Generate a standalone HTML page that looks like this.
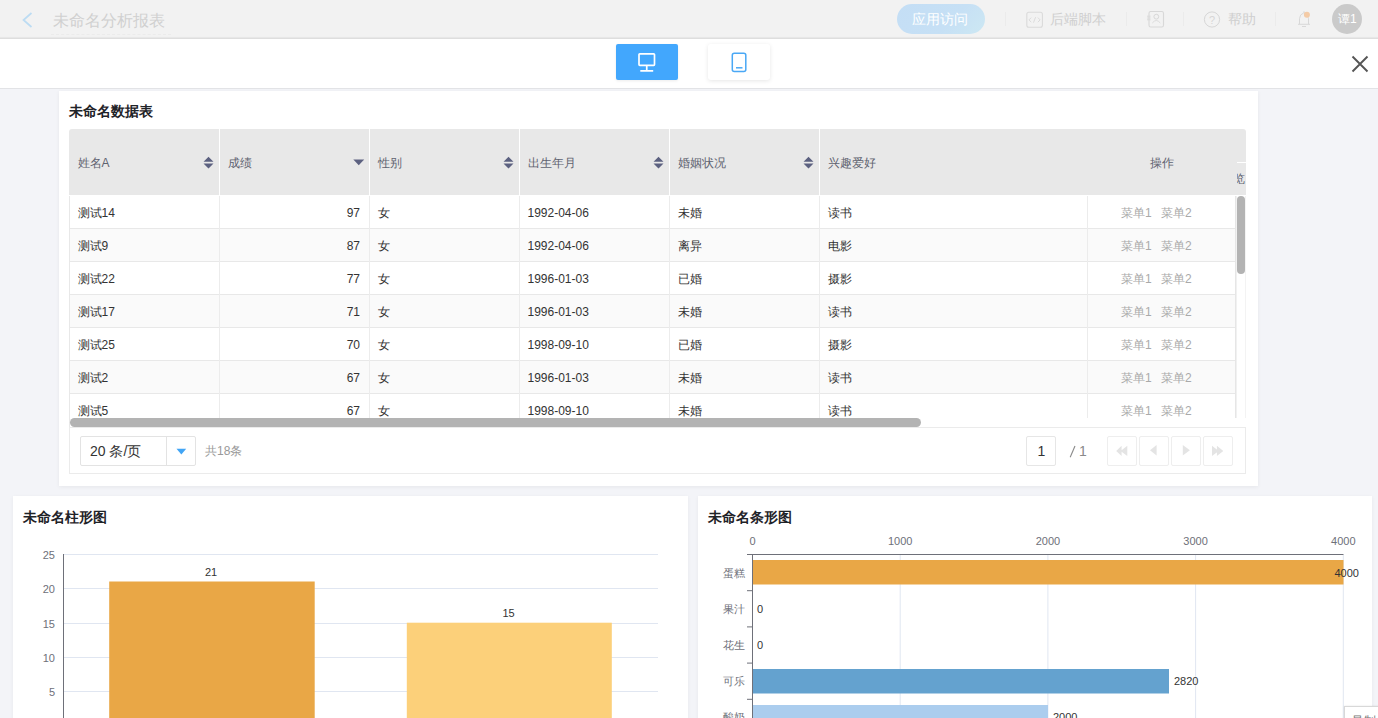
<!DOCTYPE html>
<html><head><meta charset="utf-8">
<style>
*{margin:0;padding:0;box-sizing:border-box}
html,body{width:1378px;height:718px;overflow:hidden}
body{font-family:"Liberation Sans",sans-serif;background:#f3f4f8;position:relative;color:#333}
.abs{position:absolute}
#top{left:0;top:0;width:1378px;height:39px;background:#f2f2f2;border-bottom:1px solid #dedede;box-shadow:inset 0 -2px 1px -1px #e6e6e6}
#bar2{left:0;top:39px;width:1378px;height:50px;background:#fff;border-bottom:1px solid #e2e3e6}
.card{position:absolute;background:#fff}
.t{position:absolute;white-space:nowrap;line-height:1}
.hd{font-size:12px;color:#5f6370}
.bd{font-size:12px;color:#333}
.op{font-size:12px;color:#aaa}
</style></head><body>
<!-- top bar -->
<div id="top" class="abs">
  <svg class="abs" style="left:20px;top:11px" width="14" height="18" viewBox="0 0 14 18"><path d="M11.5 2 L3.5 9 L11.5 16" fill="none" stroke="#bcdcf3" stroke-width="1.7"/></svg>
  <div class="t" style="left:53px;top:12.8px;font-size:16px;color:#d0d0d0">未命名分析报表</div>
  <div class="abs" style="left:51px;top:34px;width:120px;border-top:1px dashed #ebebeb"></div>
  <div class="abs" style="left:897px;top:4px;width:88px;height:30px;border-radius:15px;background:linear-gradient(135deg,#c4def5 0%,#c6e0f5 60%,#cde8f3 100%)"></div>
  <div class="t" style="left:912px;top:12px;font-size:14px;color:#fff">应用访问</div>
  <div class="abs" style="left:1005px;top:12px;width:1px;height:14px;background:#ebebeb"></div>
  <svg class="abs" style="left:1026px;top:11px" width="18" height="18" viewBox="0 0 18 18"><rect x="0.8" y="1.2" width="15.6" height="15" rx="2" fill="none" stroke="#dadada" stroke-width="1.1"/><path d="M5.2 6.6 L3 8.9 L5.2 11.2 M11.9 6.6 L14.1 8.9 L11.9 11.2 M9.6 6.2 L7.5 11.6" fill="none" stroke="#d8d8d8" stroke-width="0.9"/></svg>
  <div class="t" style="left:1050px;top:12px;font-size:14px;color:#cfcfcf">后端脚本</div>
  <div class="abs" style="left:1126px;top:12px;width:1px;height:14px;background:#ebebeb"></div>
  <svg class="abs" style="left:1146px;top:11px" width="19" height="17" viewBox="0 0 19 17"><rect x="3" y="0.5" width="14.5" height="15.5" rx="1.8" fill="none" stroke="#d8d8d8" stroke-width="1.1"/><circle cx="10.3" cy="5.7" r="2.4" fill="none" stroke="#d8d8d8" stroke-width="1"/><path d="M6.3 12 Q10.3 7 14.3 12 M1 5.2 H4.6 M1 7 H4.6 M1 8.8 H4.6" fill="none" stroke="#d8d8d8" stroke-width="0.9"/></svg>
  <div class="abs" style="left:1183px;top:12px;width:1px;height:14px;background:#ebebeb"></div>
  <svg class="abs" style="left:1203px;top:11px" width="18" height="17" viewBox="0 0 18 17"><circle cx="9" cy="8.5" r="7.6" fill="none" stroke="#d6d6d6" stroke-width="1"/><text x="9" y="12.6" font-size="11" text-anchor="middle" fill="#d6d6d6" font-family="Liberation Sans">?</text></svg>
  <div class="t" style="left:1228px;top:12px;font-size:14px;color:#cfcfcf">帮助</div>
  <div class="abs" style="left:1275px;top:12px;width:1px;height:14px;background:#ebebeb"></div>
  <svg class="abs" style="left:1296px;top:10px" width="16" height="18" viewBox="0 0 16 18"><path d="M2 14.3 H14 M3.5 14.3 V8.6 Q3.5 4.6 8 2.6 Q12.5 4.6 12.5 8.6 V14.3 M8 1.3 V2.6 M6 16.5 H10" fill="none" stroke="#d8d8d8" stroke-width="1"/><circle cx="10.9" cy="4.8" r="3" fill="#f4cba6"/></svg>
  <div class="abs" style="left:1332px;top:4px;width:30px;height:30px;border-radius:50%;background:#cacaca"></div>
  <div class="t" style="left:1338px;top:13px;font-size:12px;color:#fff">谭1</div>
</div>
<!-- bar 2 -->
<div id="bar2" class="abs">
  <div class="abs" style="left:616px;top:5px;width:62px;height:36px;border-radius:2px;background:#42a7fd;box-shadow:0 1px 3px rgba(0,0,0,0.08)"></div>
  <svg class="abs" style="left:636px;top:12px" width="22" height="22" viewBox="0 0 22 22"><rect x="3" y="2.8" width="15.5" height="11.5" rx="0.8" fill="none" stroke="#fff" stroke-width="1.7"/><path d="M10.75 14.3 V19.5 M4.3 19.9 H17.2" fill="none" stroke="#fff" stroke-width="1.7"/></svg>
  <div class="abs" style="left:708px;top:5px;width:62px;height:36px;border-radius:3px;background:#fff;box-shadow:0 1px 4px rgba(0,0,0,0.1)"></div>
  <svg class="abs" style="left:729px;top:12px" width="20" height="22" viewBox="0 0 20 22"><rect x="3.3" y="2.2" width="13.5" height="18.2" rx="2" fill="none" stroke="#4aa8f5" stroke-width="1.5"/><path d="M7 16.8 H13.5" stroke="#4aa8f5" stroke-width="1.5"/></svg>
  <svg class="abs" style="left:1349.5px;top:15px" width="20" height="20" viewBox="0 0 20 20"><path d="M2.5 2.5 L17.5 17.5 M17.5 2.5 L2.5 17.5" stroke="#555" stroke-width="1.9"/></svg>
</div>
<!-- table card -->
<!-- table card -->
<div class="card" style="left:59px;top:91px;width:1199px;height:395px;box-shadow:0 1px 4px rgba(0,0,0,0.06)"></div>
<div class="t" style="left:69px;top:104px;font-size:14px;font-weight:bold;color:#1f2328">未命名数据表</div>
<div class="abs" style="left:69px;top:129px;width:1177px;height:66px;background:#e8e8e8;border-radius:3px 3px 0 0"></div>
<div class="abs" style="left:219px;top:129px;width:1px;height:67px;background:#fff"></div>
<div class="abs" style="left:369px;top:129px;width:1px;height:67px;background:#fff"></div>
<div class="abs" style="left:519px;top:129px;width:1px;height:67px;background:#fff"></div>
<div class="abs" style="left:669px;top:129px;width:1px;height:67px;background:#fff"></div>
<div class="abs" style="left:819px;top:129px;width:1px;height:67px;background:#fff"></div>
<div class="t hd" style="left:77.5px;top:156.5px">姓名A</div>
<div class="t hd" style="left:227.5px;top:156.5px">成绩</div>
<div class="t hd" style="left:377.5px;top:156.5px">性别</div>
<div class="t hd" style="left:527.5px;top:156.5px">出生年月</div>
<div class="t hd" style="left:677.5px;top:156.5px">婚姻状况</div>
<div class="t hd" style="left:827.5px;top:156.5px">兴趣爱好</div>
<svg class="abs" style="left:203.4px;top:156px" width="11" height="13" viewBox="0 0 11 13"><path d="M0.5 5.8 L5.5 0.8 L10.5 5.8Z M0.5 7.6 L5.5 12.6 L10.5 7.6Z" fill="#5c6180"/></svg>
<svg class="abs" style="left:503.4px;top:156px" width="11" height="13" viewBox="0 0 11 13"><path d="M0.5 5.8 L5.5 0.8 L10.5 5.8Z M0.5 7.6 L5.5 12.6 L10.5 7.6Z" fill="#5c6180"/></svg>
<svg class="abs" style="left:653.4px;top:156px" width="11" height="13" viewBox="0 0 11 13"><path d="M0.5 5.8 L5.5 0.8 L10.5 5.8Z M0.5 7.6 L5.5 12.6 L10.5 7.6Z" fill="#5c6180"/></svg>
<svg class="abs" style="left:803.4px;top:156px" width="11" height="13" viewBox="0 0 11 13"><path d="M0.5 5.8 L5.5 0.8 L10.5 5.8Z M0.5 7.6 L5.5 12.6 L10.5 7.6Z" fill="#5c6180"/></svg>
<svg class="abs" style="left:353px;top:159px" width="12" height="7" viewBox="0 0 12 7"><path d="M0.3 0.5 L11.2 0.5 L5.75 6.3Z" fill="#5c6180"/></svg>
<div class="t hd" style="left:1150px;top:156.5px">操作</div>
<div class="abs" style="left:1237px;top:162px;width:9px;height:1px;background:#fff"></div>
<div class="abs" style="left:1237px;top:172px;width:9px;height:12px;overflow:hidden"><div class="t hd" style="left:-4px;top:1px">览</div></div>
<div class="abs" style="left:69px;top:196px;width:1177px;height:222px;overflow:hidden">
<div class="abs" style="left:0;top:0px;width:1167px;height:33px;background:#fff;border-bottom:1px solid #e8e8e8"></div>
<div class="t bd" style="left:8.5px;top:11px">测试14</div>
<div class="t bd" style="left:150px;width:141px;text-align:right;top:11px">97</div>
<div class="t bd" style="left:308.5px;top:11px">女</div>
<div class="t bd" style="left:458.5px;top:11px">1992-04-06</div>
<div class="t bd" style="left:608.5px;top:11px">未婚</div>
<div class="t bd" style="left:758.5px;top:11px">读书</div>
<div class="t op" style="left:1052px;top:11px">菜单1</div><div class="t op" style="left:1092px;top:11px">菜单2</div>
<div class="abs" style="left:0;top:33px;width:1167px;height:33px;background:#fafafa;border-bottom:1px solid #e8e8e8"></div>
<div class="t bd" style="left:8.5px;top:44px">测试9</div>
<div class="t bd" style="left:150px;width:141px;text-align:right;top:44px">87</div>
<div class="t bd" style="left:308.5px;top:44px">女</div>
<div class="t bd" style="left:458.5px;top:44px">1992-04-06</div>
<div class="t bd" style="left:608.5px;top:44px">离异</div>
<div class="t bd" style="left:758.5px;top:44px">电影</div>
<div class="t op" style="left:1052px;top:44px">菜单1</div><div class="t op" style="left:1092px;top:44px">菜单2</div>
<div class="abs" style="left:0;top:66px;width:1167px;height:33px;background:#fff;border-bottom:1px solid #e8e8e8"></div>
<div class="t bd" style="left:8.5px;top:77px">测试22</div>
<div class="t bd" style="left:150px;width:141px;text-align:right;top:77px">77</div>
<div class="t bd" style="left:308.5px;top:77px">女</div>
<div class="t bd" style="left:458.5px;top:77px">1996-01-03</div>
<div class="t bd" style="left:608.5px;top:77px">已婚</div>
<div class="t bd" style="left:758.5px;top:77px">摄影</div>
<div class="t op" style="left:1052px;top:77px">菜单1</div><div class="t op" style="left:1092px;top:77px">菜单2</div>
<div class="abs" style="left:0;top:99px;width:1167px;height:33px;background:#fafafa;border-bottom:1px solid #e8e8e8"></div>
<div class="t bd" style="left:8.5px;top:110px">测试17</div>
<div class="t bd" style="left:150px;width:141px;text-align:right;top:110px">71</div>
<div class="t bd" style="left:308.5px;top:110px">女</div>
<div class="t bd" style="left:458.5px;top:110px">1996-01-03</div>
<div class="t bd" style="left:608.5px;top:110px">未婚</div>
<div class="t bd" style="left:758.5px;top:110px">读书</div>
<div class="t op" style="left:1052px;top:110px">菜单1</div><div class="t op" style="left:1092px;top:110px">菜单2</div>
<div class="abs" style="left:0;top:132px;width:1167px;height:33px;background:#fff;border-bottom:1px solid #e8e8e8"></div>
<div class="t bd" style="left:8.5px;top:143px">测试25</div>
<div class="t bd" style="left:150px;width:141px;text-align:right;top:143px">70</div>
<div class="t bd" style="left:308.5px;top:143px">女</div>
<div class="t bd" style="left:458.5px;top:143px">1998-09-10</div>
<div class="t bd" style="left:608.5px;top:143px">已婚</div>
<div class="t bd" style="left:758.5px;top:143px">摄影</div>
<div class="t op" style="left:1052px;top:143px">菜单1</div><div class="t op" style="left:1092px;top:143px">菜单2</div>
<div class="abs" style="left:0;top:165px;width:1167px;height:33px;background:#fafafa;border-bottom:1px solid #e8e8e8"></div>
<div class="t bd" style="left:8.5px;top:176px">测试2</div>
<div class="t bd" style="left:150px;width:141px;text-align:right;top:176px">67</div>
<div class="t bd" style="left:308.5px;top:176px">女</div>
<div class="t bd" style="left:458.5px;top:176px">1996-01-03</div>
<div class="t bd" style="left:608.5px;top:176px">未婚</div>
<div class="t bd" style="left:758.5px;top:176px">读书</div>
<div class="t op" style="left:1052px;top:176px">菜单1</div><div class="t op" style="left:1092px;top:176px">菜单2</div>
<div class="abs" style="left:0;top:198px;width:1167px;height:33px;background:#fff;border-bottom:1px solid #e8e8e8"></div>
<div class="t bd" style="left:8.5px;top:209px">测试5</div>
<div class="t bd" style="left:150px;width:141px;text-align:right;top:209px">67</div>
<div class="t bd" style="left:308.5px;top:209px">女</div>
<div class="t bd" style="left:458.5px;top:209px">1998-09-10</div>
<div class="t bd" style="left:608.5px;top:209px">未婚</div>
<div class="t bd" style="left:758.5px;top:209px">读书</div>
<div class="t op" style="left:1052px;top:209px">菜单1</div><div class="t op" style="left:1092px;top:209px">菜单2</div>
<div class="abs" style="left:150px;top:0;width:1px;height:222px;background:#ececec"></div>
<div class="abs" style="left:300px;top:0;width:1px;height:222px;background:#ececec"></div>
<div class="abs" style="left:450px;top:0;width:1px;height:222px;background:#ececec"></div>
<div class="abs" style="left:600px;top:0;width:1px;height:222px;background:#ececec"></div>
<div class="abs" style="left:750px;top:0;width:1px;height:222px;background:#ececec"></div>
<div class="abs" style="left:1018px;top:0;width:1px;height:222px;background:#ececec"></div>
<div class="abs" style="left:1166px;top:0;width:1px;height:222px;background:#e6e6e6"></div>
<div class="abs" style="left:1167px;top:0;width:1px;height:222px;background:#f1f1f1"></div>
<div class="abs" style="left:1176px;top:0;width:1px;height:222px;background:#f3f3f3"></div>
<div class="abs" style="left:1168px;top:0;width:8px;height:78px;border-radius:4px;background:#b3b3b3"></div>
</div>
<div class="abs" style="left:69px;top:196px;width:1px;height:278px;background:#e8e8e8"></div>
<div class="abs" style="left:70px;top:418px;width:851px;height:9px;border-radius:4.5px;background:#b3b3b3"></div>
<div class="abs" style="left:69px;top:427px;width:1177px;height:47px;border:1px solid #ebebeb"></div>
<div class="abs" style="left:80px;top:436px;width:116px;height:30px;border:1px solid #e3e3e3;border-radius:2px;background:#fff"></div>
<div class="abs" style="left:166px;top:437px;width:1px;height:28px;background:#e3e3e3"></div>
<svg class="abs" style="left:176px;top:448px" width="11" height="7" viewBox="0 0 11 7"><path d="M0.5 0.8 L10.2 0.8 L5.35 6.4Z" fill="#42a5f5"/></svg>
<div class="t" style="left:90px;top:444px;font-size:14px;color:#333">20 条/页</div>
<div class="t" style="left:205px;top:445px;font-size:12px;color:#999">共18条</div>
<div class="abs" style="left:1026px;top:436px;width:30px;height:30px;border:1px solid #e6e6e6;border-radius:2px"></div>
<div class="t" style="left:1037.5px;top:444px;font-size:14px;color:#333">1</div>
<svg class="abs" style="left:1068px;top:444px" width="10" height="16" viewBox="0 0 10 16"><path d="M2.2 13.2 L7 2" stroke="#8a8a8a" stroke-width="1.1"/></svg><div class="t" style="left:1079px;top:444px;font-size:14px;color:#8a8a8a">1</div>
<div class="abs" style="left:1107px;top:436px;width:30px;height:30px;border:1px solid #eeeeee;border-radius:2px"></div>
<div class="abs" style="left:1139px;top:436px;width:30px;height:30px;border:1px solid #eeeeee;border-radius:2px"></div>
<div class="abs" style="left:1171px;top:436px;width:30px;height:30px;border:1px solid #eeeeee;border-radius:2px"></div>
<div class="abs" style="left:1203px;top:436px;width:30px;height:30px;border:1px solid #eeeeee;border-radius:2px"></div>
<svg class="abs" style="left:1110px;top:442px" width="22" height="17" viewBox="0 0 22 17"><path d="M6.2 8.9 L11.6 3.7 L11.6 14.1Z M10.6 8.9 L17.3 3.7 L17.3 14.1Z" fill="#e4e4e4"/></svg>
<svg class="abs" style="left:1142px;top:442px" width="22" height="17" viewBox="0 0 22 17"><path d="M8 8.3 L14.6 3 L14.6 13.6Z" fill="#e4e4e4"/></svg>
<svg class="abs" style="left:1174px;top:442px" width="22" height="17" viewBox="0 0 22 17"><path d="M8.8 3 L15.9 8.3 L8.8 13.6Z" fill="#e4e4e4"/></svg>
<svg class="abs" style="left:1206px;top:442px" width="22" height="17" viewBox="0 0 22 17"><path d="M6 3.7 L12.7 8.9 L6 14.1Z M10.9 3.7 L17.3 8.9 L10.9 14.1Z" fill="#e4e4e4"/></svg>
<!-- bar chart card -->
<div class="card" style="left:13px;top:496px;width:675px;height:240px;box-shadow:0 1px 4px rgba(0,0,0,0.05)"></div>
<div class="t" style="left:23px;top:510px;font-size:14px;font-weight:bold;color:#1f2328">未命名柱形图</div>
<div class="card" style="left:698px;top:496px;width:674px;height:240px;box-shadow:0 1px 4px rgba(0,0,0,0.05)"></div>
<div class="t" style="left:707.5px;top:510px;font-size:14px;font-weight:bold;color:#1f2328">未命名条形图</div>
<svg class="abs" style="left:0;top:0" width="1378" height="718" viewBox="0 0 1378 718">
<line x1="64" y1="554.5" x2="658" y2="554.5" stroke="#e0e6f1" stroke-width="1"/>
<text x="55" y="558.5" font-size="11" text-anchor="end" fill="#6e7079" font-family="Liberation Sans">25</text>
<line x1="64" y1="588.5" x2="658" y2="588.5" stroke="#e0e6f1" stroke-width="1"/>
<text x="55" y="592.5" font-size="11" text-anchor="end" fill="#6e7079" font-family="Liberation Sans">20</text>
<line x1="64" y1="623.5" x2="658" y2="623.5" stroke="#e0e6f1" stroke-width="1"/>
<text x="55" y="627.5" font-size="11" text-anchor="end" fill="#6e7079" font-family="Liberation Sans">15</text>
<line x1="64" y1="657.5" x2="658" y2="657.5" stroke="#e0e6f1" stroke-width="1"/>
<text x="55" y="661.5" font-size="11" text-anchor="end" fill="#6e7079" font-family="Liberation Sans">10</text>
<line x1="64" y1="691.5" x2="658" y2="691.5" stroke="#e0e6f1" stroke-width="1"/>
<text x="55" y="695.5" font-size="11" text-anchor="end" fill="#6e7079" font-family="Liberation Sans">5</text>
<line x1="63.5" y1="554" x2="63.5" y2="718" stroke="#6e7079" stroke-width="1"/>
<rect x="109.2" y="581.5" width="205.5" height="140" fill="#e9a746"/>
<rect x="406.8" y="622.7" width="205" height="100" fill="#fcd07a"/>
<text x="211" y="575.5" font-size="11" text-anchor="middle" fill="#333" font-family="Liberation Sans">21</text>
<text x="508.5" y="616.5" font-size="11" text-anchor="middle" fill="#333" font-family="Liberation Sans">15</text>
<line x1="900.2" y1="555" x2="900.2" y2="718" stroke="#e0e6f1" stroke-width="1"/>
<line x1="1047.9" y1="555" x2="1047.9" y2="718" stroke="#e0e6f1" stroke-width="1"/>
<line x1="1195.6" y1="555" x2="1195.6" y2="718" stroke="#e0e6f1" stroke-width="1"/>
<line x1="1343.3" y1="555" x2="1343.3" y2="718" stroke="#e0e6f1" stroke-width="1"/>
<text x="752.5" y="544.5" font-size="11" text-anchor="middle" fill="#6e7079" font-family="Liberation Sans">0</text>
<text x="900.2" y="544.5" font-size="11" text-anchor="middle" fill="#6e7079" font-family="Liberation Sans">1000</text>
<text x="1047.9" y="544.5" font-size="11" text-anchor="middle" fill="#6e7079" font-family="Liberation Sans">2000</text>
<text x="1195.6" y="544.5" font-size="11" text-anchor="middle" fill="#6e7079" font-family="Liberation Sans">3000</text>
<text x="1343.3" y="544.5" font-size="11" text-anchor="middle" fill="#6e7079" font-family="Liberation Sans">4000</text>
<line x1="747" y1="554.5" x2="1343.5" y2="554.5" stroke="#6e7079" stroke-width="1"/>
<line x1="747" y1="554.5" x2="752" y2="554.5" stroke="#6e7079" stroke-width="1"/>
<line x1="747" y1="590.7" x2="752" y2="590.7" stroke="#6e7079" stroke-width="1"/>
<line x1="747" y1="626.9" x2="752" y2="626.9" stroke="#6e7079" stroke-width="1"/>
<line x1="747" y1="663.1" x2="752" y2="663.1" stroke="#6e7079" stroke-width="1"/>
<line x1="747" y1="699.3" x2="752" y2="699.3" stroke="#6e7079" stroke-width="1"/>
<text x="744.5" y="576.6" font-size="11" text-anchor="end" fill="#6e7079" font-family="Liberation Sans">蛋糕</text>
<text x="744.5" y="612.8000000000001" font-size="11" text-anchor="end" fill="#6e7079" font-family="Liberation Sans">果汁</text>
<text x="744.5" y="649.0" font-size="11" text-anchor="end" fill="#6e7079" font-family="Liberation Sans">花生</text>
<text x="744.5" y="685.2" font-size="11" text-anchor="end" fill="#6e7079" font-family="Liberation Sans">可乐</text>
<text x="744.5" y="721.4000000000001" font-size="11" text-anchor="end" fill="#6e7079" font-family="Liberation Sans">酸奶</text>
<rect x="753" y="560" width="590.5" height="24.5" fill="#e9a746"/>
<rect x="753" y="669" width="416" height="24.5" fill="#64a2cf"/>
<rect x="753" y="705" width="295" height="24.5" fill="#abcdee"/>
<line x1="752.5" y1="554" x2="752.5" y2="718" stroke="#6e7079" stroke-width="1"/>
<text x="1334.5" y="576.5" font-size="11" fill="#333" font-family="Liberation Sans">4000</text>
<text x="757" y="612.8" font-size="11" fill="#333" font-family="Liberation Sans">0</text>
<text x="757" y="649" font-size="11" fill="#333" font-family="Liberation Sans">0</text>
<text x="1174" y="685.2" font-size="11" fill="#333" font-family="Liberation Sans">2820</text>
<text x="1053" y="721.4" font-size="11" fill="#333" font-family="Liberation Sans">2000</text>
</svg>
<div class="abs" style="left:1344px;top:706px;width:60px;height:30px;background:#fff;border:1px solid #d8d8d8;box-shadow:0 0 2px rgba(0,0,0,0.1)"><div class="t" style="left:7px;top:8px;font-size:12px;color:#777">导制</div></div>
</body></html>
